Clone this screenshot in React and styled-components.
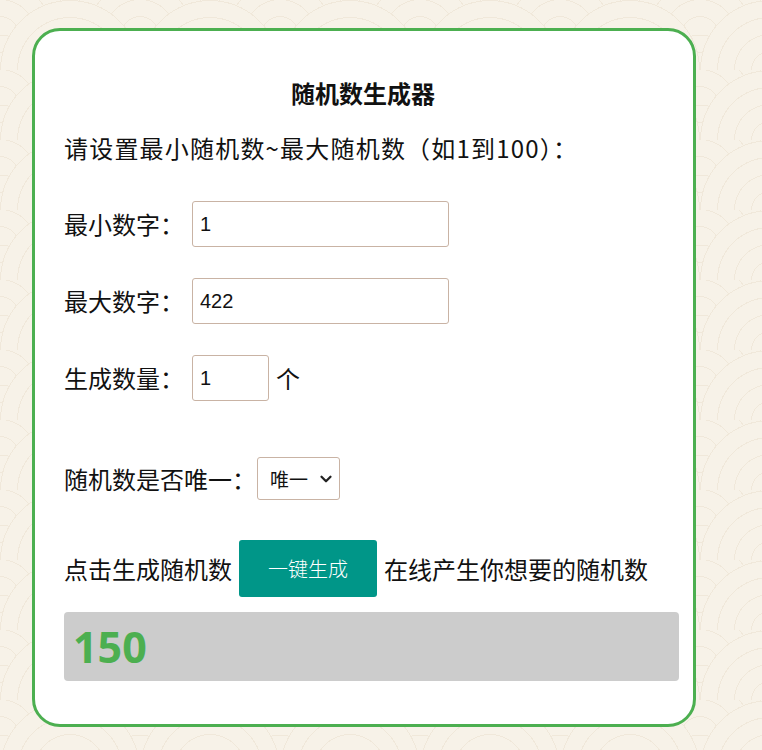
import React, { useState } from 'react';
import styled, { createGlobalStyle } from 'styled-components';
import { ChevronDown } from 'lucide-react';

const ring = '#f0e8da';
const base = '#f7f2e8';

const GlobalStyle = createGlobalStyle`
  body {
    margin: 0;
    min-height: 100vh;
    background-color: ${base};
    background-image:
      radial-gradient(circle at 50% 100%, ${base} 0 18px, ${ring} 18px 19px, ${base} 19px 35px, ${ring} 35px 36px, ${base} 36px 52px, ${ring} 52px 53px, ${base} 53px 69px, ${ring} 69px 70px, transparent 70px),
      radial-gradient(circle at 50% 100%, ${base} 0 18px, ${ring} 18px 19px, ${base} 19px 35px, ${ring} 35px 36px, ${base} 36px 52px, ${ring} 52px 53px, ${base} 53px 69px, ${ring} 69px 70px, transparent 70px);
    background-size: 140px 70px;
    background-position: 0 0, 70px 35px;
    font-family: "Noto Sans CJK SC", "Noto Sans", sans-serif;
    color: #111;
  }
`;

const Card = styled.div`
  box-sizing: border-box;
  width: 664px;
  margin: 28px 0 0 32px;
  padding: 0 14px 43px 29px;
  background: #fff;
  border: 3px solid #4caf50;
  border-radius: 28px;
  display: flex;
  flex-direction: column;
`;

const Title = styled.h2`
  margin: 47px 0 0 -17px;
  font-size: 24px;
  line-height: 30px;
  font-weight: 700;
  text-align: center;
`;

const Intro = styled.p`
  margin: 22px 0 0;
  font-size: 24px;
  line-height: 36px;
  letter-spacing: 1.2px;
`;

const Row = styled.div`
  display: flex;
  align-items: center;
  gap: ${(p) => p.$gap || 0}px;
  margin-top: ${(p) => p.$top}px;
  font-size: 24px;
  line-height: 36px;
  white-space: nowrap;
`;

const Label = styled.span`
  width: ${(p) => (p.$width ? `${p.$width}px` : 'auto')};
  flex: none;
`;

const NumInput = styled.input`
  box-sizing: border-box;
  width: ${(p) => p.$width}px;
  height: 46px;
  padding: 0 7px;
  border: 1px solid #c9b3a4;
  border-radius: 3px;
  font-family: "Liberation Sans", Arial, sans-serif;
  font-size: 20px;
  color: #111;
  outline: none;
`;

const Unit = styled.span`
  margin-left: 7px;
`;

const SelectWrap = styled.div`
  position: relative;
  margin-left: 1px;
  display: flex;

  svg {
    position: absolute;
    right: 5px;
    top: 50%;
    transform: translateY(-50%);
    pointer-events: none;
    color: #222;
  }
`;

const Select = styled.select`
  box-sizing: border-box;
  width: 83px;
  height: 43px;
  padding: 0 0 0 12px;
  appearance: none;
  -webkit-appearance: none;
  border: 1px solid #c9b3a4;
  border-radius: 3px;
  background: #fff;
  font-family: "Noto Sans CJK SC", sans-serif;
  font-size: 19px;
  color: #111;
  outline: none;
`;

const GenButton = styled.button`
  box-sizing: border-box;
  width: 138px;
  height: 57px;
  border: none;
  border-radius: 3px;
  background: #009688;
  color: #fff;
  font-family: "Noto Sans CJK SC", sans-serif;
  font-size: 20px;
  font-weight: 300;
  cursor: pointer;
`;

const Result = styled.div`
  box-sizing: border-box;
  height: 69px;
  margin-top: 15px;
  padding: 0 9px;
  display: flex;
  align-items: center;
  background: #ccc;
  border-radius: 4px;
  color: #4caf50;
  font-family: "Open Sans", "Noto Sans", sans-serif;
  font-weight: 700;
  font-size: 43px;
`;

export default function App() {
  const [min, setMin] = useState('1');
  const [max, setMax] = useState('422');
  const [count, setCount] = useState('1');
  const [result, setResult] = useState('150');

  const generate = () => {
    const a = parseInt(min, 10) || 0;
    const b = parseInt(max, 10) || 0;
    const n = Math.max(1, parseInt(count, 10) || 1);
    const out = [];
    for (let i = 0; i < n; i += 1) out.push(a + Math.floor(Math.random() * (b - a + 1)));
    setResult(out.join(' '));
  };

  return (
    <>
      <GlobalStyle />
      <Card>
        <Title>随机数生成器</Title>
        <Intro>请设置最小随机数~最大随机数（如1到100）：</Intro>
        <Row $top={35}>
          <Label $width={128}>最小数字：</Label>
          <NumInput $width={257} value={min} onChange={(e) => setMin(e.target.value)} />
        </Row>
        <Row $top={31}>
          <Label $width={128}>最大数字：</Label>
          <NumInput $width={257} value={max} onChange={(e) => setMax(e.target.value)} />
        </Row>
        <Row $top={31}>
          <Label $width={128}>生成数量：</Label>
          <NumInput $width={77} value={count} onChange={(e) => setCount(e.target.value)} />
          <Unit>个</Unit>
        </Row>
        <Row $top={56}>
          <Label>随机数是否唯一：</Label>
          <SelectWrap>
            <Select defaultValue="1">
              <option value="1">唯一</option>
              <option value="0">不唯一</option>
            </Select>
            <ChevronDown size={18} strokeWidth={3} />
          </SelectWrap>
        </Row>
        <Row $top={40} $gap={7}>
          <Label>点击生成随机数</Label>
          <GenButton onClick={generate}>一键生成</GenButton>
          <Label>在线产生你想要的随机数</Label>
        </Row>
        <Result>{result}</Result>
      </Card>
    </>
  );
}
